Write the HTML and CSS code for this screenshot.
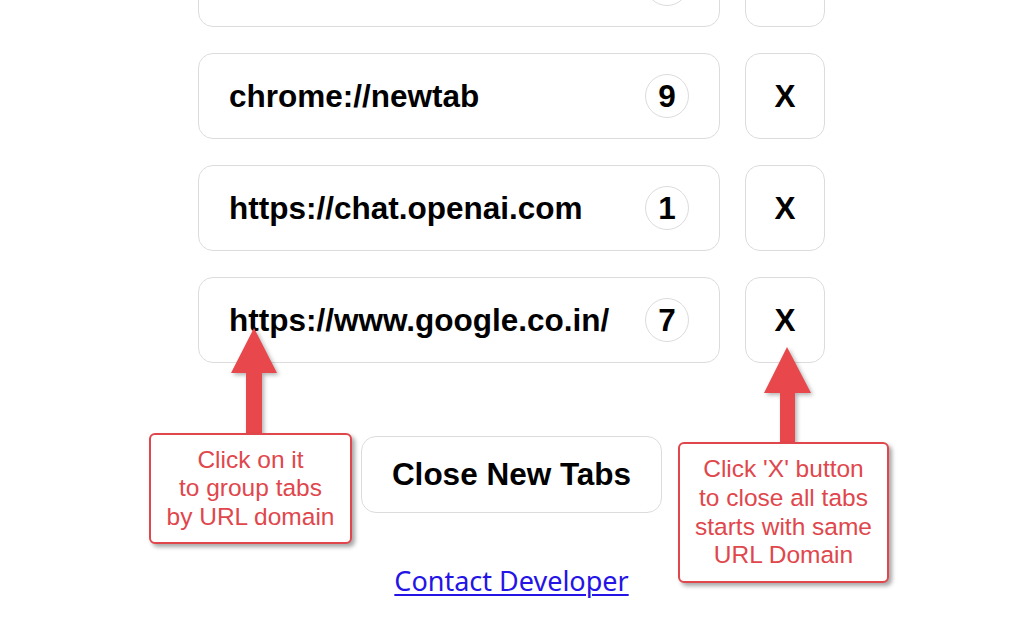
FILE: index.html
```html
<!DOCTYPE html>
<html lang="en">
<head>
<meta charset="utf-8">
<title>Tab Grouper</title>
<link rel="stylesheet" href="styles.css">
</head>
<body>
<main class="page">
  <ul class="groups">
    <li class="group">
      <button class="domain"><span class="name">chrome://extensions</span><span class="count">3</span></button>
      <button class="close">X</button>
    </li>
    <li class="group">
      <button class="domain"><span class="name">chrome://newtab</span><span class="count">9</span></button>
      <button class="close">X</button>
    </li>
    <li class="group">
      <button class="domain"><span class="name">https://chat.openai.com</span><span class="count">1</span></button>
      <button class="close">X</button>
    </li>
    <li class="group">
      <button class="domain"><span class="name">https://www.google.co.in/</span><span class="count">7</span></button>
      <button class="close">X</button>
    </li>
  </ul>
  <button class="close-new">Close New Tabs</button>
  <a class="contact" href="#">Contact Developer</a>
</main>

<svg class="arrow arrow-left" width="60" height="110" viewBox="0 0 60 110">
  <path d="M24 0 L47 45 L32 45 L32 107 L16 107 L16 45 L1 45 Z" />
</svg>
<div class="callout callout-left">Click on it<br>to group tabs<br>by URL domain</div>

<svg class="arrow arrow-right" width="60" height="100" viewBox="0 0 60 100">
  <path d="M24 0 L48 46 L32 46 L32 95 L17 95 L17 46 L1 46 Z" />
</svg>
<div class="callout callout-right">Click 'X' button<br>to close all tabs<br>starts with same<br>URL Domain</div>
</body>
</html>
```

FILE: styles.css
```css
html, body {
  margin: 0;
  padding: 0;
  background: #ffffff;
  overflow: hidden;
}

body {
  font-family: "Liberation Sans", Arial, sans-serif;
  color: #000;
}

.page {
  width: 627px;
  padding-left: 3px;
  margin: -59px auto 0;
  display: flex;
  flex-direction: column;
  align-items: center;
}

.groups {
  list-style: none;
  margin: 0;
  padding: 0;
  width: 627px;
  display: flex;
  flex-direction: column;
  gap: 26px;
}

.group {
  display: flex;
  gap: 25px;
  height: 86px;
}

.domain,
.close,
.close-new {
  font-family: "Liberation Sans", Arial, sans-serif;
  font-weight: bold;
  font-size: 31.5px;
  color: #000;
  background: #fff;
  border: 1.5px solid #dcdcdc;
  border-radius: 15px;
  cursor: pointer;
}

.domain {
  flex: 0 0 522px;
  display: flex;
  align-items: center;
  justify-content: space-between;
  padding: 0 30px 0 30px;
  text-align: left;
}

.count {
  width: 44px;
  height: 44px;
  border: 1.5px solid #dcdcdc;
  border-radius: 50%;
  display: flex;
  align-items: center;
  justify-content: center;
  box-sizing: border-box;
  flex: 0 0 auto;
}

.close {
  flex: 0 0 80px;
  display: flex;
  align-items: center;
  justify-content: center;
  padding: 0;
}

.close-new {
  margin-top: 73px;
  width: 301px;
  height: 77px;
  padding: 0;
  display: flex;
  align-items: center;
  justify-content: center;
}

.contact {
  margin-top: 49px;
  font-family: "Noto Sans", "Open Sans", sans-serif;
  font-size: 27px;
  line-height: 38px;
  color: #2414e6;
  text-decoration: underline;
  text-underline-offset: 3px;
  text-decoration-thickness: 1.5px;
}

.arrow {
  position: absolute;
  fill: #e8474b;
  filter: drop-shadow(2px 2px 2px rgba(0, 0, 0, 0.3));
}

.arrow-left {
  left: 230px;
  top: 328px;
}

.arrow-right {
  left: 763px;
  top: 347px;
}

.callout {
  position: absolute;
  box-sizing: border-box;
  background: #fff;
  border: 2px solid #e0474c;
  border-radius: 6px;
  box-shadow: 3px 3px 4px rgba(0, 0, 0, 0.35);
  color: #e0474c;
  font-family: "Liberation Sans", Arial, sans-serif;
  font-size: 24.5px;
  line-height: 28.6px;
  text-align: center;
  display: flex;
  align-items: center;
  justify-content: center;
}

.callout-left {
  left: 149px;
  top: 433px;
  width: 203px;
  height: 111px;
}

.callout-right {
  left: 678px;
  top: 442px;
  width: 211px;
  height: 141px;
}
```
